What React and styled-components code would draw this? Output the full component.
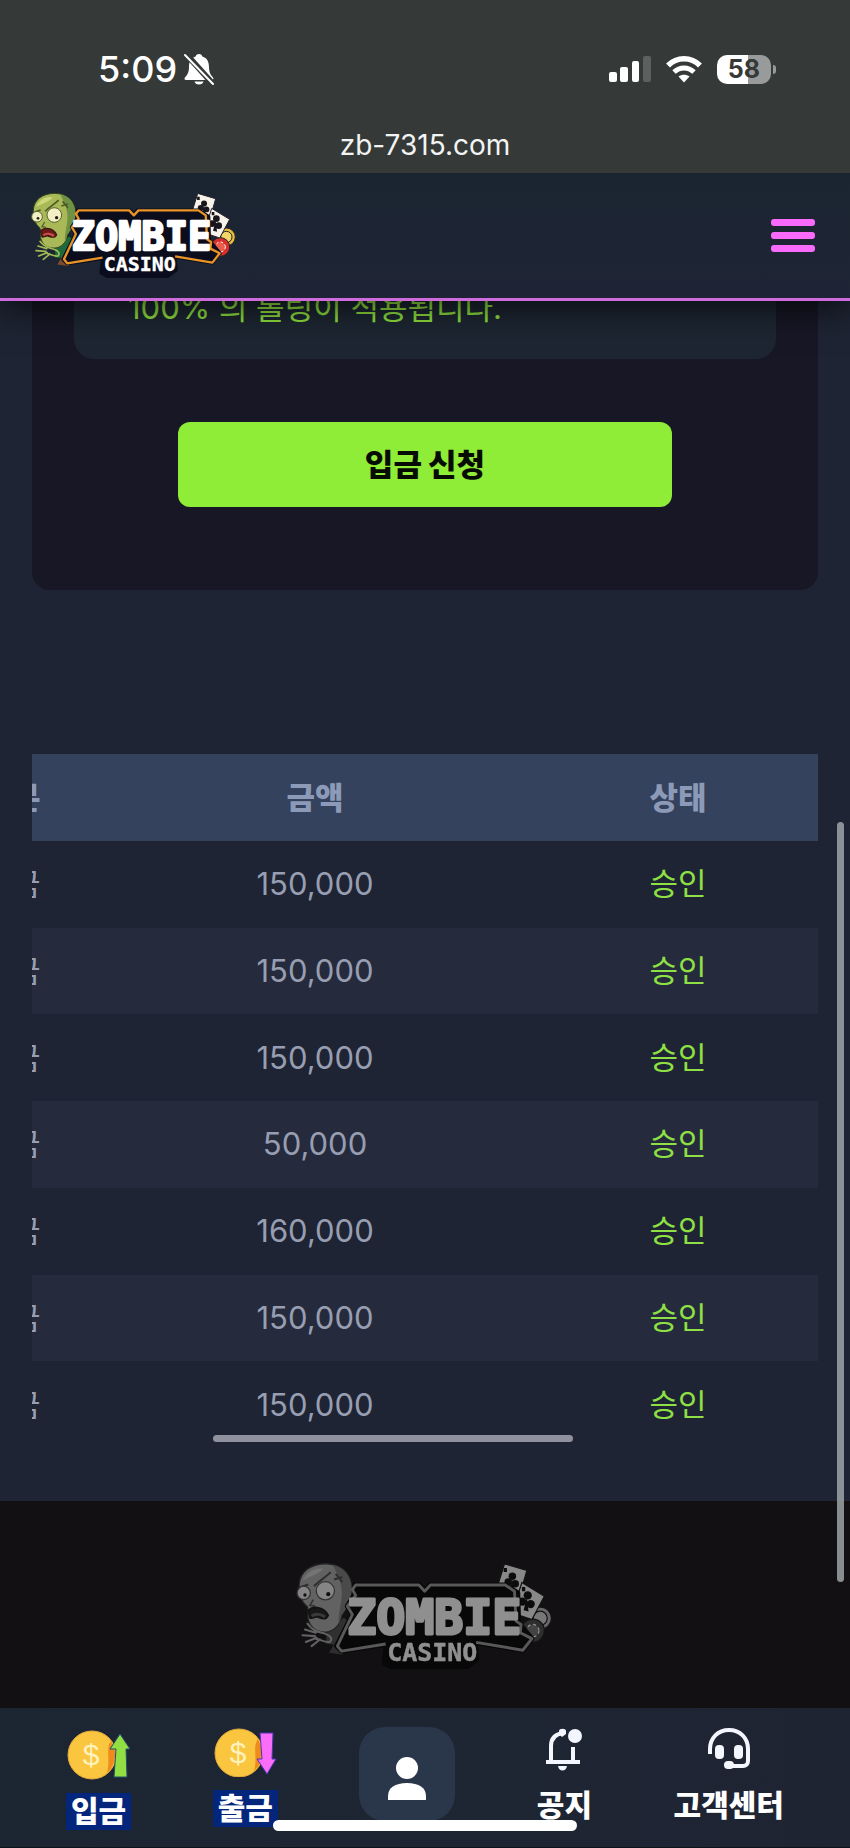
import React from "react";
import styled, { createGlobalStyle } from "styled-components";

const GlobalStyle = createGlobalStyle`
  * {
    box-sizing: border-box;
  }
  body {
    margin: 0;
    background: #1e2433;
    font-family: Inter, "Noto Sans CJK KR", sans-serif;
  }
`;

const Screen = styled.div`
  position: relative;
  display: flex;
  flex-direction: column;
  min-height: 100vh;
  background: #1e2433;
  color: #ffffff;
`;

const BrowserBar = styled.div`
  position: relative;
  z-index: 3;
  display: flex;
  flex-direction: column;
  height: 173px;
  padding-top: 44px;
  background: #353938;
`;

const StatusRow = styled.div`
  display: flex;
  align-items: center;
  justify-content: space-between;
  height: 50px;
  padding: 0 74px 0 98px;
`;

const StatusGroup = styled.div`
  display: flex;
  align-items: center;
  gap: ${(props) => props.$gap};
`;

const Time = styled.span`
  font-size: 36px;
  font-weight: 500;
  line-height: 48px;
`;

const Address = styled.div`
  margin-top: 34px;
  text-align: center;
  font-size: 28px;
  line-height: 34px;
  color: #f2f4f3;
`;

const Battery = styled.div`
  display: flex;
  align-items: center;
  gap: 2px;
`;

const BatteryLevel = styled.span`
  width: 54px;
  height: 29px;
  border-radius: 10px;
  background: linear-gradient(to right, #ffffff 58%, #989b9a 58%);
  color: #353938;
  font-size: 25px;
  font-weight: 700;
  line-height: 29px;
  text-align: center;
`;

const BatteryCap = styled.span`
  width: 3px;
  height: 9px;
  border-radius: 0 4px 4px 0;
  background: #989b9a;
`;

const Header = styled.header`
  position: relative;
  z-index: 2;
  display: flex;
  align-items: center;
  justify-content: space-between;
  height: 128px;
  padding: 0 35px 0 30px;
  border-bottom: 3px solid #cf6bdc;
  background: linear-gradient(#1b2531, #1e2435);
  box-shadow: 0 6px 34px rgba(0, 0, 0, 0.7);
`;

const LogoLink = styled.a`
  display: flex;
`;

const MenuButton = styled.button`
  display: flex;
  flex-direction: column;
  gap: 6px;
  width: 44px;
  padding: 0;
  border: 0;
  background: none;
  cursor: pointer;
`;

const MenuBar = styled.span`
  height: 7px;
  border-radius: 3px;
  background: #fa6bfd;
`;

const Main = styled.main`
  flex: 1;
  padding: 0 32px 53px;
  overflow: hidden;
`;

const DepositPanel = styled.section`
  margin-top: -17px;
  padding: 0 42px 83px;
  border-radius: 0 0 18px 18px;
  background: #171726;
`;

const Notice = styled.p`
  margin: 0 0 63px;
  padding: 0 54px 27px;
  border-radius: 0 0 20px 20px;
  background: #1d2632;
  color: #91e23f;
  font-size: 31px;
  line-height: 48px;
`;

const DepositButton = styled.button`
  display: block;
  width: 494px;
  max-width: 100%;
  height: 85px;
  margin: 0 auto;
  padding: 0 0 4px;
  border: 0;
  border-radius: 12px;
  background: #8fec37;
  color: #060b03;
  font-family: inherit;
  font-size: 31px;
  font-weight: 900;
  cursor: pointer;
`;

const TableArea = styled.div`
  position: relative;
  display: flex;
  justify-content: flex-end;
  margin-top: 164px;
  overflow: hidden;
`;

const Table = styled.table`
  flex: none;
  width: calc(100% + 100px);
  height: 694px;
  table-layout: fixed;
  border-collapse: collapse;
  text-align: center;
  font-size: 31px;
  line-height: 40px;
`;

const HeadCell = styled.th`
  width: ${(props) => props.$width};
  height: 87px;
  padding: 0;
  background: #34425d;
  color: #8c9ab8;
  font-weight: 900;
`;

const BodyRow = styled.tr`
  &:nth-child(even) {
    background: #252b3c;
  }
`;

const Cell = styled.td`
  padding: 0;
  color: ${(props) => (props.$approved ? "#8fe044" : "#989eb2")};
`;

const TableScrollbar = styled.div`
  position: absolute;
  left: 23%;
  bottom: 6px;
  width: 360px;
  height: 7px;
  border-radius: 4px;
  background: #8f929e;
`;

const PageScrollbar = styled.div`
  position: absolute;
  z-index: 3;
  top: 822px;
  right: 6px;
  width: 7px;
  height: 760px;
  border-radius: 4px;
  background: rgba(166, 174, 176, 0.8);
`;

const Footer = styled.footer`
  display: flex;
  justify-content: center;
  height: 207px;
  padding-top: 61px;
  background: #121013;

  svg {
    filter: grayscale(1) brightness(0.56);
  }
`;

const BottomNav = styled.nav`
  position: relative;
  display: flex;
  align-items: flex-start;
  justify-content: space-between;
  height: 140px;
  padding: 19px 66px 0;
  border-bottom: 1px solid #0d131b;
  background: linear-gradient(to right, #1c2632, #1f2433);
`;

const NavItem = styled.a`
  display: flex;
  flex-direction: column;
  align-items: center;
  gap: 13px;
  padding-top: 1px;
  color: #ffffff;
  text-decoration: none;
`;

const NavIcon = styled.span`
  display: flex;
  min-height: 46px;
`;

const NavLabel = styled.span`
  padding: 0 ${(props) => (props.$marked ? "5px" : "0")};
  background: ${(props) => (props.$marked ? "#03267c" : "transparent")};
  font-size: 30px;
  font-weight: 900;
  line-height: 37px;
`;

const ProfileButton = styled.button`
  display: flex;
  justify-content: center;
  width: 96px;
  height: 94px;
  padding: 30px 0 0;
  border: 0;
  border-radius: 26px;
  background: #2a364a;
  cursor: pointer;
`;

const HomeIndicator = styled.div`
  position: absolute;
  left: 50%;
  bottom: 16px;
  width: 304px;
  height: 11px;
  margin-left: -152px;
  border-radius: 6px;
  background: #ffffff;
`;

const rows = [
  "150,000",
  "150,000",
  "150,000",
  "50,000",
  "160,000",
  "150,000",
  "150,000",
];

const Logo = ({ width, height }) => (
  <svg
    width={width}
    height={height}
    viewBox="30 38 628 264"
    role="img"
    aria-label="Zombie Casino"
  >
    {/* cards and chips */}
    <g stroke="#23202a" strokeWidth="3">
      <circle cx="620" cy="173" r="27" fill="#e4bb3d" />
      <circle cx="620" cy="173" r="17" fill="#f3d766" />
      <circle cx="602" cy="203" r="28" fill="#d62f2c" />
      <circle cx="602" cy="203" r="15" fill="#ec5c4a" stroke="#fff" strokeDasharray="7 7" />
      <path d="M534 42 588 58 570 120 516 100Z" fill="#f7f2ea" />
      <path d="M576 87 630 120 600 176 552 160Z" fill="#f7f2ea" />
    </g>
    <g fill="#18151c">
      <circle cx="553" cy="72" r="9" />
      <circle cx="543" cy="86" r="9" />
      <circle cx="560" cy="90" r="9" />
      <path d="M552 76l-4 28 10 3zM532 52h8v10h-8z" />
      <circle cx="590" cy="118" r="10" />
      <circle cx="577" cy="133" r="10" />
      <circle cx="597" cy="139" r="10" />
      <path d="M588 122l-8 32 12 3zM576 98h8v10h-8z" />
    </g>
    {/* zombie */}
    <path d="M104 200 148 170 170 190 146 240 104 236Z" fill="#1d6a3a" stroke="#10271b" strokeWidth="3" />
    <path
      d="M40 92C42 62 66 42 104 42 142 42 166 66 166 100 166 130 154 150 142 166 140 184 132 199 112 205 90 210 70 200 64 182 58 172 64 158 60 146 46 134 38 118 40 92Z"
      fill="#a9b957"
      stroke="#37431f"
      strokeWidth="3"
    />
    <path d="M120 44C148 50 166 72 166 100 166 130 154 150 142 166L136 188C132 170 140 146 142 124 146 96 134 70 120 44Z" fill="#6f9143" />
    <path d="M48 82C60 58 82 50 98 54 88 66 64 74 48 82Z" fill="#cbd878" />
    <path d="M76 96C86 84 102 76 116 62M44 98 62 92M128 66l16 20M124 80l20-6" stroke="#4c5b26" strokeWidth="5" fill="none" />
    <circle cx="51" cy="112" r="16" fill="#f3efc4" stroke="#55612c" strokeWidth="3" />
    <circle cx="103" cy="107" r="22" fill="#f3efc4" stroke="#55612c" strokeWidth="3" />
    <circle cx="54" cy="117" r="4" fill="#201b16" />
    <circle cx="110" cy="115" r="5" fill="#201b16" />
    <path d="M74 128l-8 14 12 2" fill="none" stroke="#55612c" strokeWidth="4" />
    <path d="M62 154C74 143 100 144 110 166 104 180 92 172 84 170 76 168 70 176 66 172Z" fill="#6b1919" stroke="#3b1a14" strokeWidth="4" />
    <path d="M70 168C80 160 94 164 102 170" stroke="#c94d48" strokeWidth="7" fill="none" />
    <path
      d="M60 186C72 204 88 206 102 210 114 214 122 222 114 230 104 232 90 224 80 222M80 208 54 200M78 216 48 214M82 220 56 230M90 224 70 240"
      fill="none"
      stroke="#a3b957"
      strokeWidth="5"
      strokeLinecap="round"
    />
    <path d="M112 256 132 222 158 240 144 260Z" fill="#7c4a2c" />
    {/* name plate */}
    <path
      d="M174 93H330L342 106 354 93H536L566 112 568 184 600 222 578 250 464 232 468 272 444 290 262 290 244 280 250 236 142 252 130 240 168 164 156 144 176 112Z"
      fill="#0c0d1c"
      stroke="#0c0d1c"
      strokeWidth="12"
      strokeLinejoin="round"
    />
    <path
      d="M248 235 142 252 132 240 168 164 156 144 176 118 168 104 176 93H328L342 108 356 93H536L558 108 562 180 574 188 572 208 600 222 578 250 466 231"
      fill="none"
      stroke="#e99427"
      strokeWidth="7"
      strokeLinejoin="round"
    />
    <g
      fill="#ffffff"
      stroke="#ffffff"
      strokeLinejoin="round"
      fontFamily="'DejaVu Sans Mono', monospace"
      fontWeight="700"
      textAnchor="middle"
    >
      <text x="365" y="212" fontSize="116" strokeWidth="7">
        ZOMBIE
      </text>
      <text x="360" y="276" fontSize="60" strokeWidth="1">
        CASINO
      </text>
    </g>
  </svg>
);

const BellOffIcon = () => (
  <svg width="32" height="32" viewBox="0 0 32 32" aria-hidden="true">
    <path
      d="M16 1C18 1 19 2 19.400 3.600 24 5 26 9 26 14 26 20 28 22 30 24.500 31 26 30 27 29 27H3C1.500 27 1 25.500 2 24.500 4 22 6 20 6 14 6 9 8 5 12.600 3.600 13 2 14 1 16 1ZM11.500 28.500H20.500C20 30.500 18.500 31.500 16 31.500S12 30.500 11.500 28.500Z"
      fill="#fff"
    />
    <path d="M3 1 31 32" stroke="#353938" strokeWidth="6" />
    <path d="M2 2 30 31" stroke="#fff" strokeWidth="2" strokeLinecap="round" />
  </svg>
);

const SignalIcon = () => (
  <svg width="42" height="28" viewBox="0 0 42 28" aria-hidden="true">
    <rect x="0" y="17" width="8" height="10" rx="2" fill="#fff" />
    <rect x="11" y="12" width="8" height="15" rx="2" fill="#fff" />
    <rect x="23" y="6" width="7" height="21" rx="2" fill="#fff" />
    <rect x="34" y="1" width="8" height="26" rx="2" fill="#5d605f" />
  </svg>
);

const WifiIcon = () => (
  <svg width="36" height="28" viewBox="0 0 36 28" fill="none" aria-hidden="true">
    <path d="M2 10.500C11 1.500 25 1.500 34 10.500" stroke="#fff" strokeWidth="5.500" />
    <path d="M8 17C14 11.500 22 11.500 28 17" stroke="#fff" strokeWidth="5" />
    <path d="M12.500 21.500C15.500 19 20.500 19 23.500 21.500L18 27.500Z" fill="#fff" />
  </svg>
);

const Coin = ({ cy }) => (
  <>
    <circle cx="25" cy={cy} r="24" fill="#fbc63f" stroke="#e6a93c" />
    <path d={`M44 ${cy - 14}C38 ${cy - 6} 44 ${cy + 4} 40 ${cy + 18} 45 ${cy + 14} 49 ${cy + 5} 48 ${cy - 4}Z`} fill="#ef8b1c" />
    <text
      x="24"
      y={cy + 10}
      fontFamily="'Liberation Sans', sans-serif"
      fontSize="30"
      textAnchor="middle"
      fill="#fff2bd"
    >
      $
    </text>
  </>
);

const DepositIcon = () => (
  <svg width="63" height="52" viewBox="0 0 63 52" aria-hidden="true">
    <Coin cy={27} />
    <path d="M53 6 63 21H59L60 49H47L49 21H43Z" fill="#91df42" stroke="#24506a" />
  </svg>
);

const WithdrawIcon = () => (
  <svg width="63" height="49" viewBox="0 0 63 49" aria-hidden="true">
    <Coin cy={25} />
    <path d="M46 5H59L58 31H62L53 46 43 31H48Z" fill="#fa6df8" stroke="#4a35b4" />
  </svg>
);

const PersonIcon = () => (
  <svg width="40" height="44" viewBox="0 0 40 44" fill="#fff" aria-hidden="true">
    <circle cx="20" cy="11" r="11" />
    <path d="M1 43V39C1 31 8 26 20 26S39 31 39 39V43Z" />
  </svg>
);

const NoticeIcon = () => (
  <svg width="38" height="44" viewBox="0 0 38 44" fill="none" aria-hidden="true">
    <path d="M6 33V18C6 10 11 6 18 5M28 19V33" stroke="#f3f6ff" strokeWidth="4" />
    <path d="M1 34H35" stroke="#f3f6ff" strokeWidth="4" />
    <path d="M14 6V3C14 0 21 0 21 3V6L17 9Z" fill="#f3f6ff" />
    <path d="M13 38H22C21 44 14 44 13 38Z" fill="#f3f6ff" />
    <circle cx="30" cy="8" r="7" fill="#f3f6ff" />
  </svg>
);

const SupportIcon = () => (
  <svg width="42" height="42" viewBox="0 0 42 42" fill="none" aria-hidden="true">
    <path
      d="M2 26V21C2 10 10 2 21 2S40 10 40 21V33C40 36 38 38 35 38H21"
      stroke="#f3f6ff"
      strokeWidth="4"
    />
    <rect x="7" y="17" width="9" height="14" rx="4" fill="#f3f6ff" />
    <rect x="26" y="17" width="9" height="14" rx="4" fill="#f3f6ff" />
    <rect x="16" y="33" width="10" height="8" rx="4" fill="#f3f6ff" />
  </svg>
);

const App = () => {
  return (
    <Screen>
      <GlobalStyle />
      <BrowserBar>
        <StatusRow>
          <StatusGroup $gap="6px">
            <Time>5:09</Time>
            <BellOffIcon />
          </StatusGroup>
          <StatusGroup $gap="15px">
            <SignalIcon />
            <WifiIcon />
            <Battery>
              <BatteryLevel>58</BatteryLevel>
              <BatteryCap />
            </Battery>
          </StatusGroup>
        </StatusRow>
        <Address>zb-7315.com</Address>
      </BrowserBar>

      <Header>
        <LogoLink href="#home">
          <Logo width={209} height={88} />
        </LogoLink>
        <MenuButton type="button" aria-label="메뉴">
          <MenuBar />
          <MenuBar />
          <MenuBar />
        </MenuButton>
      </Header>

      <Main>
        <DepositPanel>
          <Notice>100% 의 롤링이 적용됩니다.</Notice>
          <DepositButton type="button">입금 신청</DepositButton>
        </DepositPanel>

        <TableArea>
          <Table>
            <thead>
              <tr>
                <HeadCell $width="160px">구분</HeadCell>
                <HeadCell $width="auto">금액</HeadCell>
                <HeadCell $width="280px">상태</HeadCell>
              </tr>
            </thead>
            <tbody>
              {rows.map((amount, index) => (
                <BodyRow key={index}>
                  <Cell>입금</Cell>
                  <Cell>{amount}</Cell>
                  <Cell $approved>승인</Cell>
                </BodyRow>
              ))}
            </tbody>
          </Table>
          <TableScrollbar />
        </TableArea>
      </Main>

      <Footer>
        <Logo width={261} height={110} />
      </Footer>

      <BottomNav>
        <NavItem href="#deposit">
          <NavIcon>
            <DepositIcon />
          </NavIcon>
          <NavLabel $marked>입금</NavLabel>
        </NavItem>
        <NavItem href="#withdraw">
          <NavIcon>
            <WithdrawIcon />
          </NavIcon>
          <NavLabel $marked>출금</NavLabel>
        </NavItem>
        <ProfileButton type="button" aria-label="내 정보">
          <PersonIcon />
        </ProfileButton>
        <NavItem href="#notice">
          <NavIcon>
            <NoticeIcon />
          </NavIcon>
          <NavLabel>공지</NavLabel>
        </NavItem>
        <NavItem href="#support">
          <NavIcon>
            <SupportIcon />
          </NavIcon>
          <NavLabel>고객센터</NavLabel>
        </NavItem>
        <HomeIndicator />
      </BottomNav>
      <PageScrollbar />
    </Screen>
  );
};

export default App;
